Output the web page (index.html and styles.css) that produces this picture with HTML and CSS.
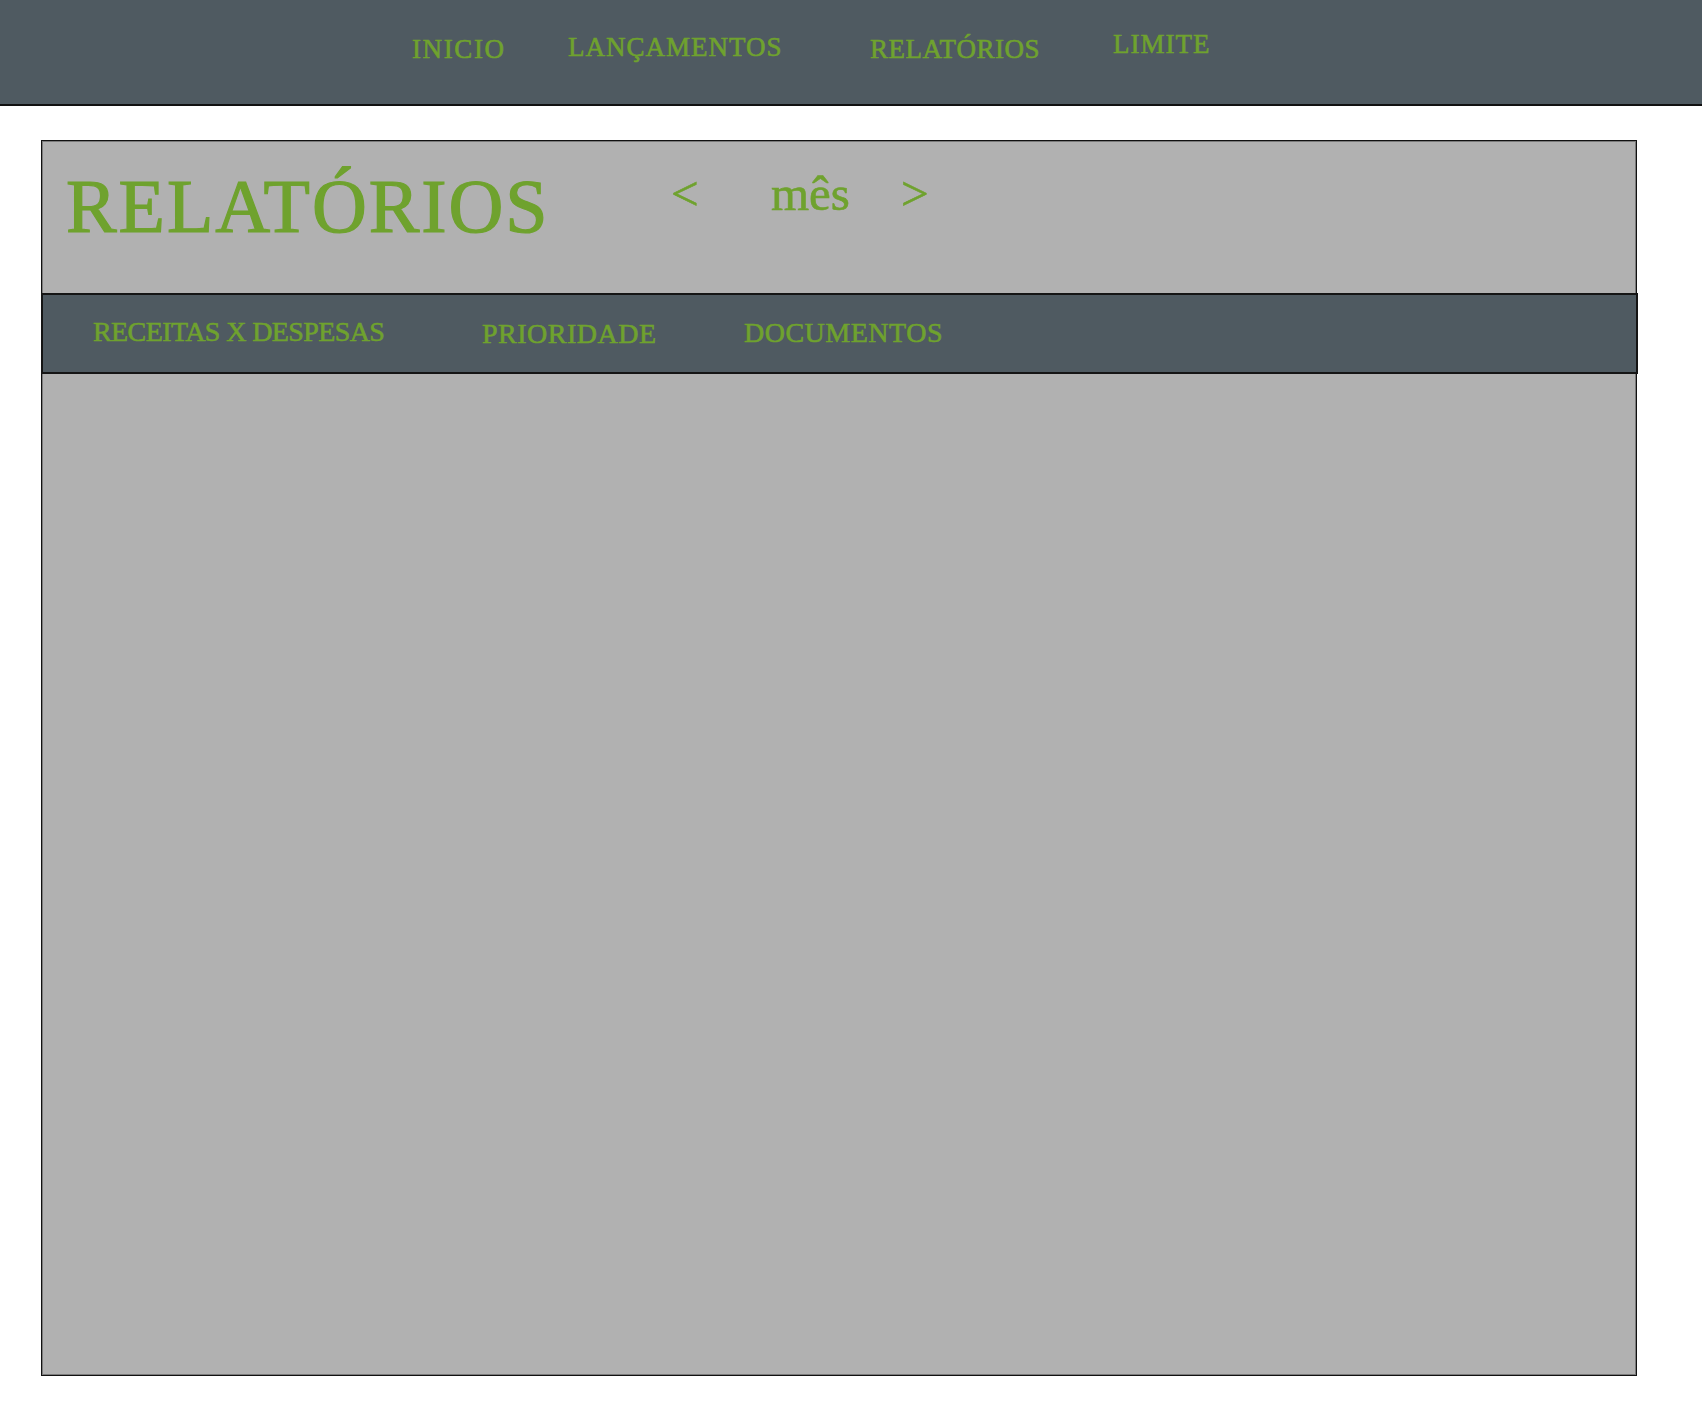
FILE: index.html
```html
<!DOCTYPE html>
<html lang="pt-BR">
<head>
<meta charset="utf-8">
<title>Relatórios</title>
<link rel="stylesheet" href="styles.css">
</head>
<body>
<header class="topbar">
  <nav class="topnav">
    <a class="topnav__item topnav__item--inicio" href="#">INICIO</a>
    <a class="topnav__item topnav__item--lanc" href="#">LANÇAMENTOS</a>
    <a class="topnav__item topnav__item--rel" href="#">RELATÓRIOS</a>
    <a class="topnav__item topnav__item--limite" href="#">LIMITE</a>
  </nav>
</header>
<main class="panel">
  <section class="panel__head">
    <h1 class="panel__title">RELATÓRIOS</h1>
    <a class="month__arrow" href="#">&lt;</a>
    <span class="month__label">mês</span>
    <a class="month__arrow" href="#">&gt;</a>
  </section>
  <nav class="tabs">
    <a class="tabs__item tabs__item--receitas" href="#">RECEITAS X DESPESAS</a>
    <a class="tabs__item tabs__item--prioridade" href="#">PRIORIDADE</a>
    <a class="tabs__item tabs__item--documentos" href="#">DOCUMENTOS</a>
  </nav>
  <section class="panel__body"></section>
</main>
</body>
</html>
```
FILE: styles.css
```css
* { box-sizing: border-box; }

html, body {
  margin: 0;
  padding: 0;
  background: #ffffff;
}

body {
  font-family: "Liberation Serif", "Times New Roman", serif;
  color: #6fa22e;
}

a { color: inherit; text-decoration: none; }

.topbar {
  height: 106px;
  background: #4f5a61;
  border-bottom: 2px solid #111;
}

.topnav {
  display: grid;
  grid-template-columns: 156px 302px 243px auto;
  align-items: start;
  padding: 31px 0 0 412px;
}

.topnav__item {
  font-size: 27px;
  line-height: 1;
  letter-spacing: 1px;
  -webkit-text-stroke: 0.6px #6fa22e;
}

.topnav__item--inicio { margin-top: 5px; letter-spacing: 1.6px; }
.topnav__item--lanc { margin-top: 3px; }
.topnav__item--rel { margin-top: 5px; letter-spacing: 0.5px; }
.topnav__item--limite { margin-top: 0; }

.panel {
  margin: 34px 0 0 41px;
  width: 1596px;
  height: 1236px;
  background: #b1b1b1;
  border: 1px solid #111;
  box-shadow: inset 0 0 0 1px #7a7a7a;
  display: flex;
  flex-direction: column;
}

.panel__head {
  height: 152px;
  display: grid;
  grid-template-columns: 605px 100px 130px auto;
  align-items: start;
  padding: 27px 0 0 24px;
}

.panel__title {
  margin: 0;
  font-weight: normal;
  font-size: 76px;
  line-height: 1;
  letter-spacing: 1.9px;
  -webkit-text-stroke: 1.2px #6fa22e;
}

.month__arrow,
.month__label {
  font-size: 49px;
  line-height: 1;
  margin-top: 1px;
  -webkit-text-stroke: 0.6px #6fa22e;
}

.tabs {
  height: 81px;
  margin: 0 -2px 0 -1px;
  background: #4f5a61;
  border: 2px solid #151515;
  display: grid;
  grid-template-columns: 389px 262px auto;
  align-items: start;
  padding: 23px 0 0 50px;
}

.tabs__item {
  font-size: 28px;
  line-height: 1;
  -webkit-text-stroke: 0.6px #6fa22e;
}

.tabs__item--receitas { letter-spacing: -0.6px; }
.tabs__item--prioridade { margin-top: 2px; letter-spacing: 0.5px; }
.tabs__item--documentos { margin-top: 1px; letter-spacing: 0.5px; }

.panel__body {
  flex: 1;
}
```
